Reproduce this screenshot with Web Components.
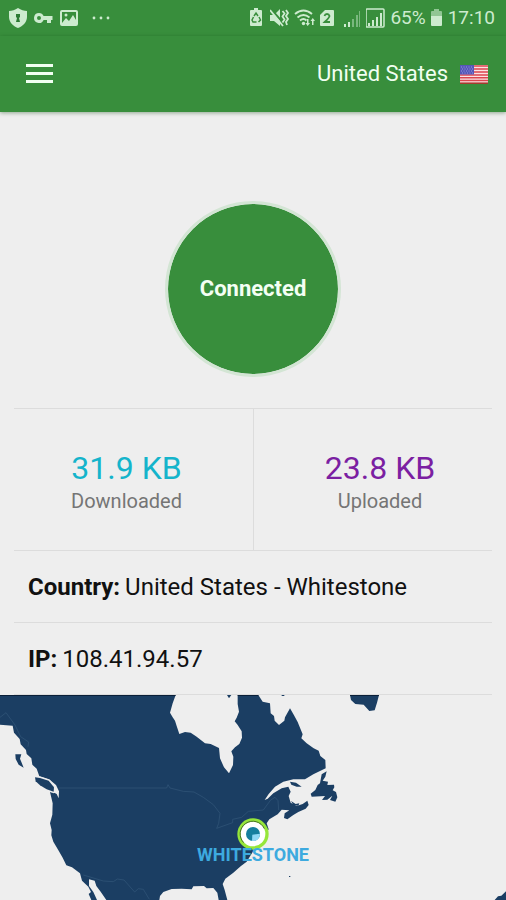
<!DOCTYPE html>
<html lang="en">
<head>
<meta charset="utf-8">
<meta name="viewport" content="width=device-width, initial-scale=1">
<title>VPN</title>
<style>
  body { margin: 0; background: #eee; color: #111; font-family: Roboto, "Noto Sans", sans-serif; }
</style>
</head>
<body>
<vpn-app></vpn-app>
<script>
const define = (name, html) => {
  const t = document.createElement('template');
  t.innerHTML = html;
  customElements.define(name, class extends HTMLElement {
    constructor() {
      super();
      this.attachShadow({ mode: 'open' }).append(t.content.cloneNode(true));
    }
  });
};

define('status-bar', `
<style>
  :host { display: flex; justify-content: space-between; align-items: center; height: 36px; padding: 0 11px 0 9px; background: #388e3c; color: #cdebcf; font-size: 19px; line-height: 24px; }
  div { display: flex; align-items: center; }
  .left { gap: 6px; }
  .right { gap: 4px; }
  svg { display: block; height: 20px; fill: currentColor; flex: none; }
</style>
<div class="left">
  <svg width="18" viewBox="0 0 18 20"><path d="M9 0C12 2 15 3 18 3V9C18 14 14 18 9 20C4 18 0 14 0 9V3C3 3 6 2 9 0Z"/><path fill="#2c7a34" d="M7 6h4v3l-1 1 1 4H7l1-4-1-1z"/></svg>
  <svg width="20" viewBox="0 0 20 20"><path fill-rule="evenodd" d="M6 5a5 5 0 1 0 4.600 7H14v3h4v-3h1.500V8H10.600A5 5 0 0 0 6 5Zm0 3a2 2 0 1 1 0 4a2 2 0 0 1 0-4Z"/></svg>
  <svg width="20" viewBox="0 0 20 20"><path fill-rule="evenodd" d="M3 2h14a2 2 0 0 1 2 2v12a2 2 0 0 1-2 2H3a2 2 0 0 1-2-2V4a2 2 0 0 1 2-2Zm0 2v11l4-5 3 3 4-6 3 5V4Z"/><circle cx="7" cy="7" r="1.500"/></svg>
  <svg width="26" viewBox="0 0 26 20"><circle cx="9" cy="10" r="1.400"/><circle cx="16" cy="10" r="1.400"/><circle cx="23" cy="10" r="1.400"/></svg>
</div>
<div class="right">
  <svg width="16" viewBox="0 0 16 20"><path d="M3 2h1V0h4v2h3a1 1 0 0 1 1 1v14a1 1 0 0 1-1 1H1a1 1 0 0 1-1-1V3a1 1 0 0 1 1-1z"/><path fill="none" stroke="#388e3c" stroke-width="1.500" d="M4 8l2-3 2 3M9 9l1.500 3L8.500 14M6.500 14H3L2 12l1.500-3"/></svg>
  <svg width="20" viewBox="0 0 20 20"><path d="M0 7h4l6-6v17l-6-5H0z"/><path fill="none" stroke="#388e3c" stroke-width="2" d="M1 1l13 15"/><path fill="none" stroke="currentColor" stroke-width="1.800" d="M0 2l13 16M12.500 3l2 2.500-2 3 2 3-2 3M16 2l2 3-2 3 2 3-2 3 1 3"/></svg>
  <svg width="22" viewBox="0 0 22 20"><g fill="none" stroke="currentColor" stroke-width="1.900"><path d="M1 6Q9.500-1 18 6M3.500 9.500Q9.500 4.500 15.500 9.500M6 12.500Q9.500 9.500 12.500 12.500"/></g><circle cx="9.500" cy="15.500" r="1.700"/><path d="M13 11h1.500v4H16l-2.300 3-2.200-3H13zM18 17h1.500v-4H21l-2.200-3-2.300 3H18z"/></svg>
  <svg width="16" viewBox="0 0 16 20"><path d="M5 2h8a1 1 0 0 1 1 1v14a1 1 0 0 1-1 1H1a1 1 0 0 1-1-1V7z"/><path fill="none" stroke="#388e3c" stroke-width="1.800" d="M4.500 8Q5 6 7 6T9.500 8Q9.500 9.500 4.700 14H10"/></svg>
  <svg width="22" viewBox="0 0 22 20"><path d="M4 16h2v3H4zM8 14h2v5H8z"/><path opacity=".45" d="M12 11h2v8h-2zM16 7h2v12h-2zM19 3h1v16h-1z"/></svg>
  <svg width="20" viewBox="0 0 20 20"><rect x="0" y="1" width="18" height="18" rx="1" fill="none" stroke="currentColor" stroke-width="1.500"/><path d="M2 15h2v3H2zM6 12h2v6H6zM10 9h2v9h-2zM14 5h2v13h-2z"/></svg>
  <span>65%</span>
  <svg width="14" viewBox="0 0 14 20"><path opacity=".6" d="M4 1h5v2h2a1 1 0 0 1 1 1v4H1V4a1 1 0 0 1 1-1h2z"/><path d="M1 8h11v9a1 1 0 0 1-1 1H2a1 1 0 0 1-1-1z"/></svg>
  <span>17:10</span>
</div>`);

define('app-header', `
<style>
  :host { display: flex; justify-content: space-between; align-items: center; height: 76px; padding: 0 18px 0 26px; box-sizing: border-box; background: #388e3c; color: #f1fff1; box-shadow: 0 1px 4px rgba(0,60,0,.4); }
  button { border: 0; padding: 0; background: none; color: inherit; font: inherit; display: flex; align-items: center; cursor: pointer; }
  .menu { padding-bottom: 2px; }
  .country { gap: 12px; font-size: 22px; line-height: 28px; }
  svg { display: block; }
</style>
<button class="menu" aria-label="Menu"><svg width="27" height="19" viewBox="0 0 27 19"><path fill="currentColor" d="M0 0h27v3H0zM0 8h27v3H0zM0 16h27v3H0z"/></svg></button>
<button class="country"><slot></slot>
  <svg width="28" height="19" viewBox="0 0 28 19"><path fill="#fbe3e3" d="M0 0h28v19H0z"/><path stroke="#dc4650" stroke-width="1.500" d="M0 1h28M0 4h28M0 7h28M0 10h28M0 12.800h28M0 15.500h28"/><path stroke="#a33024" stroke-width="1.500" d="M0 18.200h28"/><path fill="#5557b8" d="M0 0h14v9.500H0z"/><path stroke="#9a9be0" stroke-width="1" stroke-dasharray="1 1.500" d="M1 2h12M2 4h11M1 6h12M2 8h11"/></svg>
</button>`);

define('connect-button', `
<style>
  :host { display: flex; justify-content: center; padding: 89px 0 31px; }
  button { width: 176px; height: 176px; border: 3px solid #d3e5d4; border-radius: 50%; background: #388e3c; background-clip: padding-box; color: #f4fff4; font: 700 22px/28px Roboto, "Noto Sans", sans-serif; padding: 0; cursor: pointer; }
</style>
<button><slot></slot></button>`);

define('traffic-stat', `
<style>
  :host { display: flex; flex-direction: column; align-items: center; justify-content: center; height: 141px; padding-top: 4px; box-sizing: border-box; }
  .value { font-size: 32px; line-height: 38px; color: var(--accent); }
  .label { font-size: 20px; line-height: 28px; color: #757575; }
</style>
<div class="value"><slot name="value"></slot></div>
<div class="label"><slot></slot></div>`);

define('traffic-panel', `
<style>
  :host { display: grid; grid-template-columns: 1fr 1fr; margin: 0 14px; border-top: 1px solid #dcdcdc; border-bottom: 1px solid #dcdcdc; }
  ::slotted(:first-child) { padding-right: 14px; }
  ::slotted(:last-child) { padding-left: 14px; border-left: 1px solid #dcdcdc; }
</style><slot></slot>`);

define('info-row', `
<style>
  :host { display: flex; align-items: center; gap: 5px; height: 71px; margin: 0 14px; padding: 0 14px; border-bottom: 1px solid #dcdcdc; font-size: 24px; line-height: 32px; }
  b { font-weight: 700; }
</style>
<b><slot name="label"></slot></b><span><slot></slot></span>`);

define('map-pin', `
<style>
  :host { display: flex; flex-direction: column; align-items: center; color: #3daadf; font-size: 18px; font-weight: 700; line-height: 20px; }
  svg { display: block; }
  span { margin-top: -5px; }
</style>
<svg width="32" height="32" viewBox="0 0 96 96"><circle cx="48" cy="48" r="47" fill="#96e63a"/><circle cx="48" cy="48" r="37" fill="#fff"/><path fill="none" stroke="#47702a" stroke-width="3" d="M20 74A38 38 0 1 1 82 32"/><circle cx="48" cy="48" r="21" fill="#157e9e"/><path fill="#8fd8f5" d="M46 50L69 47A21 21 0 0 1 45 69Z"/></svg>
<span><slot></slot></span>`);

define('location-map', `
<style>
  :host { display: block; position: relative; overflow: hidden; }
  svg { display: block; width: 100%; height: auto; }
  ::slotted(map-pin) { position: absolute; left: 50%; top: 60%; transform: translateX(-50%); }
</style>
<svg viewBox="0 15 1518 615" role="img" aria-label="Map of North America">
  <g fill="#1b3e63">
    <path d="M0 15H527L518 40 510 68 518 82 525 92 530 108 538 132 555 126 572 128 590 140 615 160 632 162 657 174 660 205 672 232 687 250 699 225 700 200 694 184 705 172 718 162 726 143 725 124 713 105 704 94 710 83 717 65 713 42 713 15H775L788 35 810 40 812 70 822 78 824 92 837 105 853 92 855 82 870 55 882 76 893 96 904 123 908 133 904 145 920 160 941 175 956 182 961 198 976 210 977 235 940 253 915 268 880 268 850 275 825 290 806 312 794 330 803 326 820 310 845 295 865 290 872 305 866 318 872 338 890 348 908 342 922 332 926 345 917 356 895 366 880 375 862 388 852 384 854 370 868 361 845 359 833 373 808 388 800 400 806 418 790 440 765 475 740 515 722 529 700 548 676 566 668 582 674 600 682 630H656L652 608 640 594 620 595 612 588 580 589 575 598 545 596 515 597 490 606 480 618 478 630H274L266 612 273 606 265 590 246 572 240 550 216 532 199 526 188 503 176 482 160 455 154 436 155 420 150 400 157 374 158 340 150 306 163 308 170 312 176 325 177 304 168 285 150 270 132 263 118 259 110 236 97 224 94 205 80 192 78 180 62 163 59 147 42 128 38 107 0 104Z"/>
    <path stroke="#eee" stroke-width="9" stroke-linejoin="round" paint-order="stroke" d="M105 262L120 264 146 272 162 292 161 305 140 298 120 286 107 274Z"/>
    <path d="M46 193H64L60 206 71 233 56 224 47 207Z"/>
    <path d="M965 253L980 244 976 260 968 272 984 275 982 285 1002 284 1003 292 998 301 1008 306 1012 322 1006 335 990 330 997 317 982 329 966 330 975 318 935 320 932 311 946 300 953 285 960 280ZM870 275L888 278 905 290 890 290 874 284ZM873 333L887 342 898 340 895 347 880 346ZM681 15H694L687 25Z"/>
    <path d="M1050 15H1137L1131 38 1124 61 1108 63 1091 44 1066 42 1053 30ZM1484 630L1494 619 1504 617 1518 604V630ZM867 558h4v3h-4zM845 15h8v3h-8z"/>
  </g>
  <path fill="#eee" d="M267 568L284 572 289 588 302 605 319 630H291L280 606 267 588Z"/>
  <g fill="none" stroke="#34577a" stroke-width="2">
    <path d="M0 82L18 68 45 105 62 140 86 156 84 170M176 294H500L504 284 510 294 550 304 582 306 610 322 640 344 660 370 656 400 650 415 698 398 698 388 725 382 745 364 790 360 812 330 825 322 834 332 836 360M250 555L310 573 340 575 352 567 372 570 404 606 415 596 430 598 448 628"/>
  </g>
  <path stroke="#081a30" stroke-width="3" d="M0 16H527M713 16H775M1050 16H1137"/>
</svg>
<slot></slot>`);

define('vpn-app', `
<style>:host { display: block; } app-header { position: relative; }</style>
<status-bar></status-bar>
<app-header>United States</app-header>
<main>
  <connect-button>Connected</connect-button>
  <traffic-panel>
    <traffic-stat style="--accent:#14b4cb"><span slot="value">31.9 KB</span>Downloaded</traffic-stat>
    <traffic-stat style="--accent:#7b1fa2"><span slot="value">23.8 KB</span>Uploaded</traffic-stat>
  </traffic-panel>
  <info-row><span slot="label">Country:</span>United States - Whitestone</info-row>
  <info-row><span slot="label">IP:</span>108.41.94.57</info-row>
  <location-map><map-pin>WHITESTONE</map-pin></location-map>
</main>`);
</script>
</body>
</html>
